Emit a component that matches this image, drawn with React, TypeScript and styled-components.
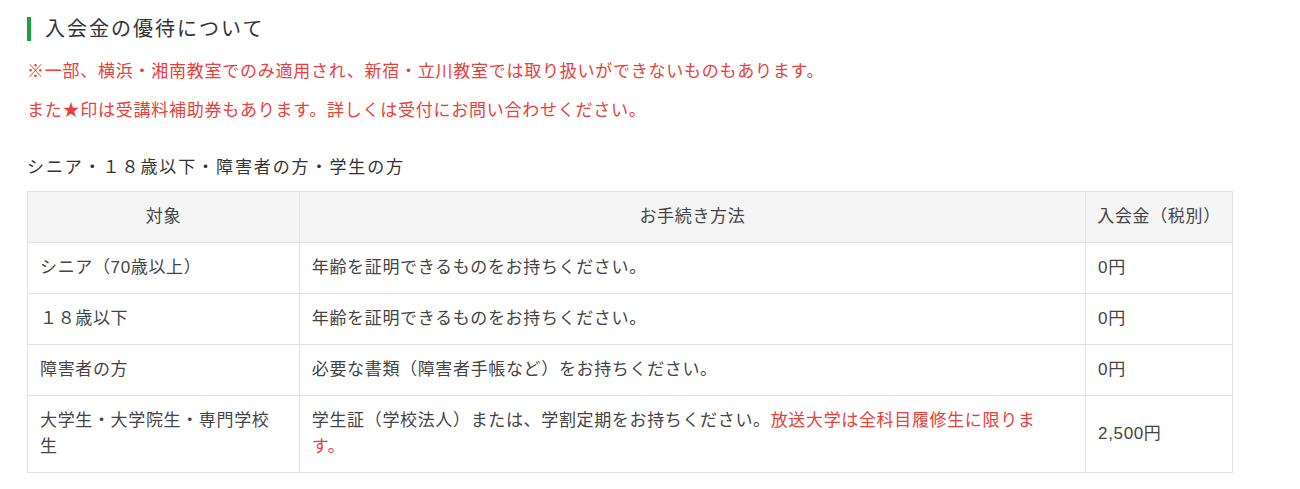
import styled, { createGlobalStyle } from 'styled-components';
import React from 'react';

const GlobalStyle = createGlobalStyle`
  body{
    margin: 0;
    background: #fff;
    font-family: "Liberation Sans", "Noto Sans CJK JP", sans-serif;
    color: #444;
  }
`

const Wrapper = styled.section`
  padding: 17px 0 0 27px;
  width: 1206px;
`

const Title = styled.h2`
  margin: 0;
  padding-left: 14px;
  border-left: 4px solid #1aa33a;
  font-size: 20px;
  font-weight: normal;
  letter-spacing: 2px;
  line-height: 24px;
  color: #333;
`

const Notice = styled.p`
  margin: 21px 0 0;
  font-size: 17px;
  letter-spacing: 0.75px;
  line-height: 20px;
  color: #e8413b;
  & + &{
    margin-top: 19px;
  }
`

const SubTitle = styled.h3`
  margin: 35px 0 0;
  font-size: 17px;
  font-weight: normal;
  letter-spacing: 1.9px;
  line-height: 24px;
  color: #333;
`

const Table = styled.table`
  margin-top: 11px;
  width: 1206px;
  border-collapse: collapse;
  font-size: 17px;
  letter-spacing: 0.65px;
  line-height: 26px;
  color: #444;
  th, td{
    border: 1px solid #e2e2e2;
    padding: 12px 20px 12px 12px;
    vertical-align: middle;
    text-align: left;
  }
  th{
    padding: 12px 8px;
    background: #f5f5f5;
    font-weight: normal;
    text-align: center;
  }
`

const Red = styled.span`
  color: #e8413b;
`

type Row = { target: string, method: React.ReactNode, fee: string }

const rows: Row[] = [
  { target: 'シニア（70歳以上）', method: '年齢を証明できるものをお持ちください。', fee: '0円' },
  { target: '１８歳以下', method: '年齢を証明できるものをお持ちください。', fee: '0円' },
  { target: '障害者の方', method: '必要な書類（障害者手帳など）をお持ちください。', fee: '0円' },
  {
    target: '大学生・大学院生・専門学校生',
    method: <>学生証（学校法人）または、学割定期をお持ちください。<Red>放送大学は全科目履修生に限ります。</Red></>,
    fee: '2,500円'
  },
]

const App: React.FC = () => {
  return (
    <Wrapper>
      <GlobalStyle />
      <Title>入会金の優待について</Title>
      <Notice>※一部、横浜・湘南教室でのみ適用され、新宿・立川教室では取り扱いができないものもあります。</Notice>
      <Notice>また★印は受講料補助券もあります。詳しくは受付にお問い合わせください。</Notice>
      <SubTitle>シニア・１８歳以下・障害者の方・学生の方</SubTitle>
      <Table>
        <colgroup>
          <col style={{ width: 272 }} />
          <col style={{ width: 787 }} />
          <col style={{ width: 147 }} />
        </colgroup>
        <thead>
          <tr>
            <th>対象</th>
            <th>お手続き方法</th>
            <th>入会金（税別）</th>
          </tr>
        </thead>
        <tbody>
          {rows.map(r => (
            <tr key={r.target}>
              <td>{r.target}</td>
              <td>{r.method}</td>
              <td>{r.fee}</td>
            </tr>
          ))}
        </tbody>
      </Table>
    </Wrapper>
  )
}

export default App
